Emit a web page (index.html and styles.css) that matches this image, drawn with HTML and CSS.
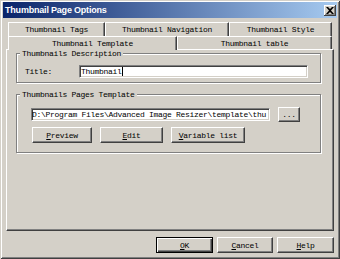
FILE: index.html
```html
<!DOCTYPE html>
<html lang="en">
<head>
    <meta charset="UTF-8">
    <title>Thumbnail Page Options</title>
    <link rel="stylesheet" href="styles.css">
</head>
<body>
  <div class="window">
    <div class="titlebar">
      <span class="title">Thumbnail Page Options</span>
      <span class="close">
        <svg width="8" height="7" viewBox="0 0 8 7"><path d="M0 0h2l2 2 2-2h2L5 3.5 8 7H6L4 5 2 7H0l3-3.5z" fill="#000"/></svg>
      </span>
    </div>

    <div class="tabs">
      <div class="tab-row back">
        <div class="tab w-tags">Thumbnail Tags</div>
        <div class="tab w-nav">Thumbnail Navigation</div>
        <div class="tab w-style">Thumbnail Style</div>
      </div>
      <div class="tab-row front">
        <div class="tab tab-active w-template">Thumbnail Template</div>
        <div class="tab w-table">Thumbnail table</div>
      </div>
    </div>

    <div class="panel">
      <div class="group group-desc">
        <div class="group-title">Thumbnails Description</div>
        <div class="field-row">
          <span class="label">Title:</span>
          <div class="textbox textbox-title">Thumbnail<span class="caret"></span></div>
        </div>
      </div>

      <div class="group group-template">
        <div class="group-title">Thumbnails Pages Template</div>
        <div class="path-row">
          <div class="textbox textbox-path">D:\Program Files\Advanced Image Resizer\template\thu</div>
          <div class="btn btn-browse">...</div>
        </div>
        <div class="btn-row">
          <div class="btn btn-preview"><u>P</u>review</div>
          <div class="btn btn-edit"><u>E</u>dit</div>
          <div class="btn btn-vars"><u>V</u>ariable list</div>
        </div>
      </div>
    </div>

    <div class="footer">
      <div class="btn btn-default btn-ok"><u>O</u>K</div>
      <div class="btn btn-cancel"><u>C</u>ancel</div>
      <div class="btn btn-help"><u>H</u>elp</div>
    </div>
  </div>
</body>
</html>
```

FILE: styles.css
```css
body {
  margin: 0;
  background: #d4d0c8;
  font-family: "Liberation Mono", monospace;
  font-size: 8px;
  letter-spacing: -0.3px;
  color: #000;
}

.window {
  width: 340px;
  height: 259px;
  box-sizing: border-box;
  padding: 2px 3px 3px 3px;
  background: #d4d0c8;
  box-shadow: inset 1px 1px #d4d0c8, inset -1px -1px #404040, inset 2px 2px #fff, inset -2px -2px #808080;
}

/* title bar */
.titlebar {
  height: 16px;
  display: flex;
  align-items: center;
  justify-content: space-between;
  padding: 0 1px 0 2px;
  background: linear-gradient(to right, #0a246a, #a6caf0);
}

.title {
  font-family: "Liberation Sans", Arial, sans-serif;
  font-weight: bold;
  font-size: 9px;
  letter-spacing: -0.2px;
  color: #fff;
}

.close {
  width: 12px;
  height: 11px;
  box-sizing: border-box;
  background: #d4d0c8;
  box-shadow: inset -1px -1px #404040, inset 1px 1px #fff, inset -2px -2px #808080;
  display: flex;
  align-items: center;
  justify-content: center;
}

/* tabs */
.tabs {
  margin-top: 4px;
  padding: 0 5px;
}

.tab-row {
  display: flex;
}

.back {
  height: 14px;
}

.front {
  height: 13px;
}

.tab {
  box-sizing: border-box;
  height: 100%;
  border-top: 1px solid #fff;
  border-left: 1px solid #fff;
  border-right: 1px solid #404040;
  box-shadow: inset -1px 0 #808080;
  display: flex;
  align-items: center;
  justify-content: center;
  white-space: nowrap;
}

.tab-active {
  height: 14px;
  position: relative;
  z-index: 1;
  background: #d4d0c8;
}

.w-tags { width: 97px; }
.w-nav { width: 124px; }
.w-style { width: 103px; }
.w-template { width: 169px; }
.w-table { width: 155px; }

/* tab page */
.panel {
  margin: 0 3px;
  height: 182px;
  box-sizing: border-box;
  border-top: 1px solid #fff;
  border-left: 1px solid #fff;
  border-right: 1px solid #404040;
  border-bottom: 1px solid #404040;
  box-shadow: inset -1px -1px #808080;
  padding: 3px 0 0 9px;
}

.group {
  width: 305px;
  box-sizing: border-box;
  border: 1px solid #808080;
  box-shadow: inset 1px 1px #fff, 1px 1px #fff;
}

.group-desc {
  height: 30px;
}

.group-template {
  height: 59px;
  margin-top: 11px;
}

.group-title {
  width: fit-content;
  height: 9px;
  line-height: 9px;
  margin: -5px 0 0 3px;
  padding: 0 2px;
  background: #d4d0c8;
  white-space: nowrap;
}

.field-row {
  display: flex;
  align-items: center;
  margin-top: 7px;
  padding-left: 8px;
}

.label {
  width: 54px;
}

.textbox {
  height: 13px;
  box-sizing: border-box;
  background: #fff;
  border-top: 1px solid #808080;
  border-left: 1px solid #808080;
  border-right: 1px solid #fff;
  border-bottom: 1px solid #fff;
  box-shadow: inset 1px 1px #404040, inset -1px -1px #d4d0c8;
  padding-left: 1px;
  line-height: 11px;
  white-space: nowrap;
}

.textbox-title {
  width: 229px;
}

.caret {
  display: inline-block;
  width: 1px;
  height: 9px;
  background: #000;
  vertical-align: -2px;
}

.path-row {
  display: flex;
  align-items: center;
  height: 15px;
  margin-top: 8px;
  padding-left: 14px;
}

.textbox-path {
  width: 239px;
  padding-left: 0;
}

/* buttons */
.btn {
  height: 16px;
  box-sizing: border-box;
  display: flex;
  align-items: center;
  justify-content: center;
  background: #d4d0c8;
  border-top: 1px solid #fff;
  border-left: 1px solid #fff;
  border-right: 1px solid #404040;
  border-bottom: 1px solid #404040;
  box-shadow: inset -1px -1px #808080;
  white-space: nowrap;
}

.btn-browse {
  width: 22px;
  height: 15px;
  margin-left: 8px;
}

.btn-row {
  display: flex;
  gap: 8px;
  margin-top: 5px;
  padding-left: 15px;
}

.btn-preview { width: 60px; }
.btn-edit { width: 63px; }
.btn-vars { width: 74px; }

.footer {
  display: flex;
  justify-content: flex-end;
  gap: 4px;
  margin-top: 6px;
  padding-right: 3px;
}

.btn-default {
  border: 1px solid #000;
  box-shadow: inset 1px 1px #fff, inset -1px -1px #404040, inset -2px -2px #808080;
}

.btn-ok { width: 57px; }
.btn-cancel { width: 56px; }
.btn-help { width: 57px; }
```
